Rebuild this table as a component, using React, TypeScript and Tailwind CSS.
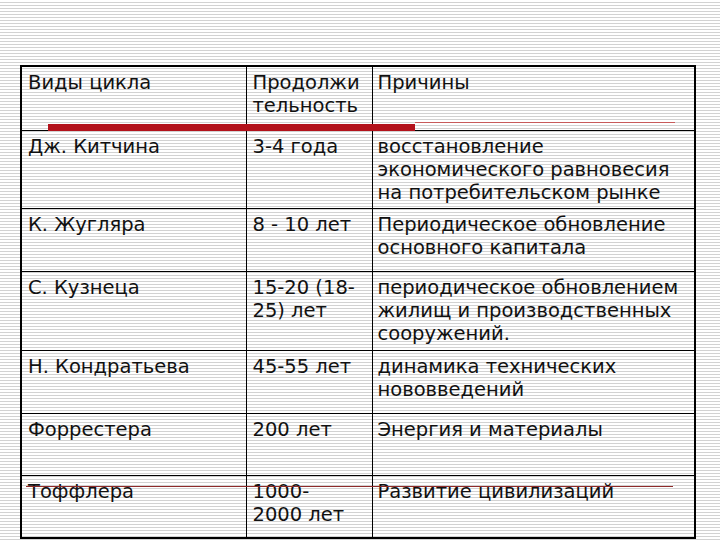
import React from "react";

type Row = {
  name: string[];
  dur: string[];
  cause: string[];
  h: string;
};

const rows: Row[] = [
  { name: ["Виды цикла"], dur: ["Продолжи", "тельность"], cause: ["Причины"], h: "h-[64px]" },
  {
    name: ["Дж. Китчина"],
    dur: ["3-4 года"],
    cause: ["восстановление", "экономического равновесия", "на потребительском рынке"],
    h: "h-[78px]",
  },
  {
    name: ["К. Жугляра"],
    dur: ["8 - 10 лет"],
    cause: ["Периодическое обновление", "основного капитала"],
    h: "h-[63px]",
  },
  {
    name: ["С. Кузнеца"],
    dur: ["15-20 (18-", "25) лет"],
    cause: ["периодическое обновлением", "жилищ и производственных", "сооружений."],
    h: "h-[79px]",
  },
  {
    name: ["Н. Кондратьева"],
    dur: ["45-55 лет"],
    cause: ["динамика технических", "нововведений"],
    h: "h-[63px]",
  },
  { name: ["Форрестера"], dur: ["200 лет"], cause: ["Энергия и материалы"], h: "h-[62px]" },
  { name: ["Тоффлера"], dur: ["1000-", "2000 лет"], cause: ["Развитие цивилизаций"], h: "h-[63px]" },
];

const Lines = ({ lines }: { lines: string[] }) => (
  <>
    {lines.map((l, i) => (
      <div key={i} className="whitespace-nowrap">
        {l}
      </div>
    ))}
  </>
);

const App = () => {
  return (
    <div className="relative w-[720px] h-[540px] overflow-hidden bg-white bg-[repeating-linear-gradient(to_bottom,#ffffff_0px,#ffffff_2px,#d2d2d2_2px,#d2d2d2_3px)] pt-[65px] pl-[20px] font-['DejaVu_Sans',Verdana,sans-serif] text-[19.5px] leading-[23px] text-[#111]">
      <table className="border-collapse border-2 border-black table-fixed w-[674px]">
        <colgroup>
          <col className="w-[225px]" />
          <col className="w-[126px]" />
          <col className="w-[323px]" />
        </colgroup>
        <tbody>
          {rows.map((r, i) => (
            <tr key={i} className={r.h}>
              <td className="border border-black align-top pl-[6px] pt-[4px]">
                <Lines lines={r.name} />
              </td>
              <td className="border border-black align-top pl-[6px] pt-[4px]">
                <Lines lines={r.dur} />
              </td>
              <td className="border border-black align-top pl-[5px] pt-[4px]">
                <Lines lines={r.cause} />
              </td>
            </tr>
          ))}
        </tbody>
      </table>

      {/* slide template decoration */}
      <div className="absolute left-[48px] top-[124px] w-[367px] h-[7px] bg-[#b3121b]" />
      <div className="absolute left-[415px] top-[122px] w-[260px] h-px bg-[#c85a5a]" />
      <div className="absolute left-[26px] top-[486px] w-[647px] h-px bg-[#8e2a2a]" />
    </div>
  );
};

export default App;
